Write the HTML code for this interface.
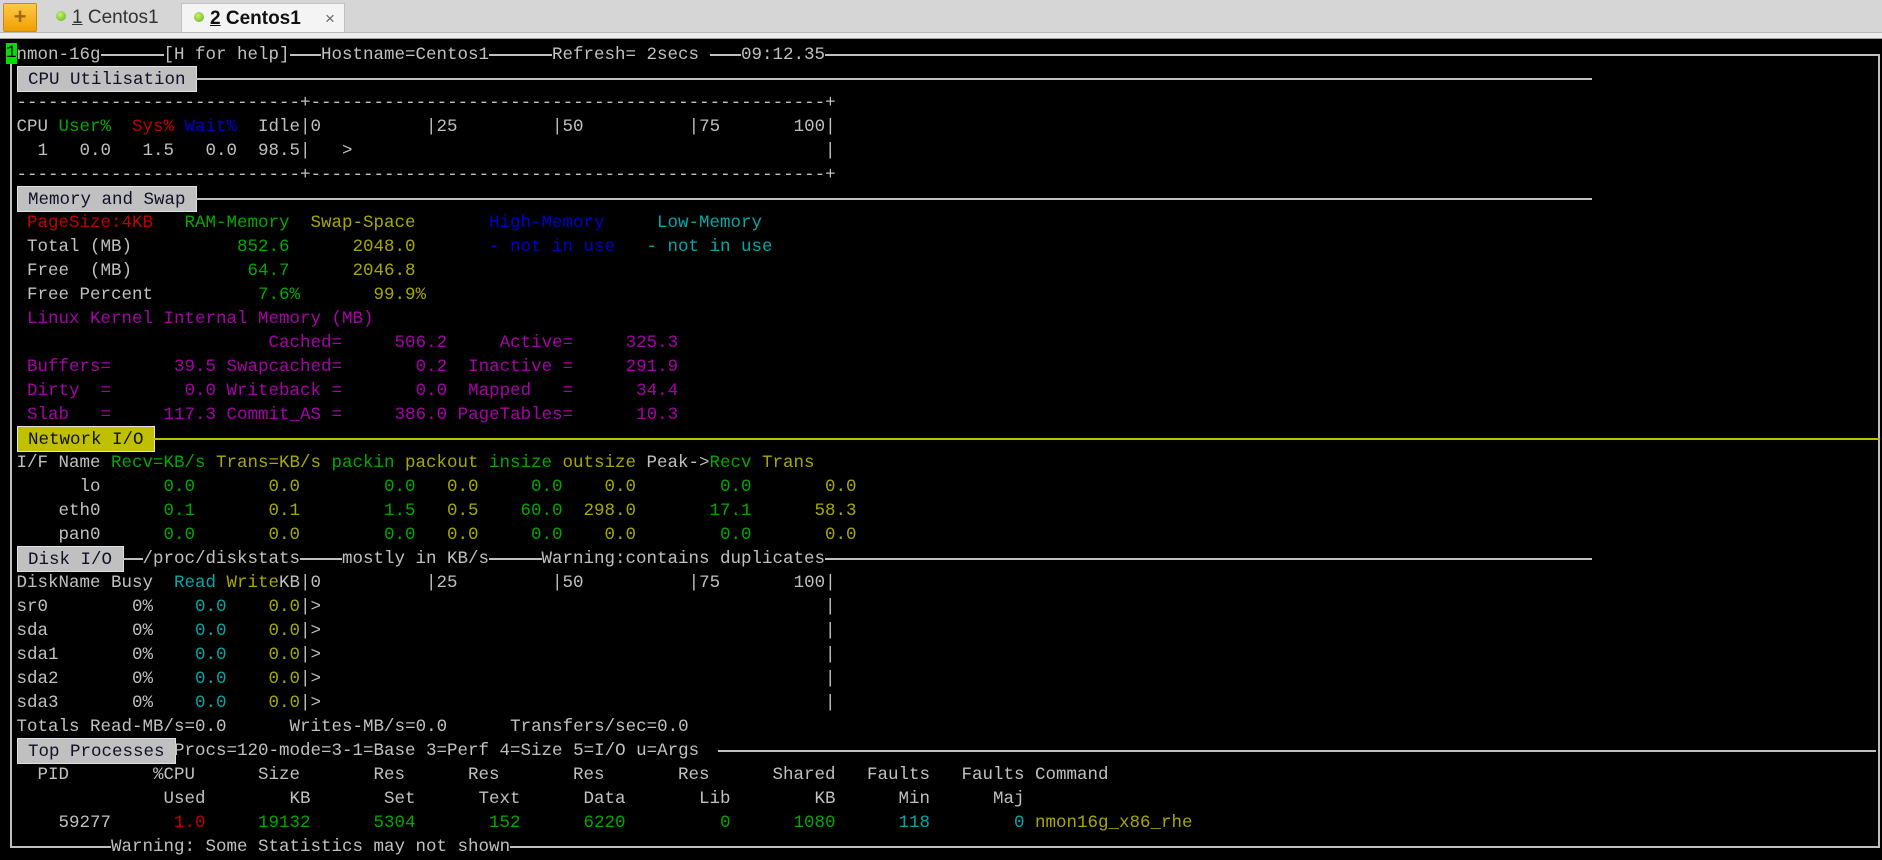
<!DOCTYPE html>
<html><head><meta charset="utf-8">
<style>
*{margin:0;padding:0;box-sizing:border-box}
html,body{width:1882px;height:860px;overflow:hidden;background:#000}
#tabs{position:absolute;left:0;top:0;width:1882px;height:39px;background:#d6d6d6;font-family:"Liberation Sans",sans-serif}
#tabs .sep{position:absolute;left:0;top:32px;width:1882px;height:7px;background:#ececec;border-top:1px solid #b8b8b8;border-bottom:1px solid #a0a0a0}
.plus{position:absolute;left:3px;top:3px;width:34px;height:29px;background:linear-gradient(#ffc84a,#f0a000);border:1px solid #c88a10;border-radius:2px;color:#9a6a10;font-weight:bold;font-size:22px;text-align:center;line-height:26px}
.tab{position:absolute;top:3px;height:30px;font-size:19px;line-height:29px;color:#333}
.dot{display:inline-block;width:10px;height:10px;border-radius:50%;background:radial-gradient(circle at 40% 35%,#c8f070,#60b010);vertical-align:middle;margin-right:6px;position:relative;top:-2px}
.tab2{left:181px;width:164px;background:#f4f4f4;border:1px solid #c0c0c0;border-bottom:none;padding-left:12px;font-weight:bold;color:#111}
#term{position:absolute;left:0;top:39px;width:1882px;height:821px;background:#000}
.r{position:absolute;left:0;height:24px;width:1882px}
.t{position:absolute;top:0;white-space:pre;font-family:"Liberation Mono",monospace;font-size:17.5px;line-height:24px;color:#c0c0c0;left:calc(6px + var(--c)*10.5px)}
.e{position:absolute;top:0;white-space:pre;font-family:"Liberation Mono",monospace;font-size:17.5px;line-height:24px;color:#c0c0c0;left:calc(6px + (var(--e) + 1)*10.5px);transform:translateX(-100%)}
.g{color:#00a800}.rd{color:#c00000}.b{color:#0000c8}.y{color:#a8a800}.c{color:#00a8a8}.m{color:#a800a8}
.lbl{background:#c0c0c0;color:#101028;height:26px;top:-1px;line-height:26px;border:1px solid #e0e0e0}
.lbly{background:#c0c000;color:#101010}
.h{position:absolute;height:2px;background:#c0c0c0;top:11px}
.v{position:absolute;width:2px;background:#c0c0c0}
.cur{background:#00e000;color:#000;height:21px;line-height:21px;top:0}
</style></head><body>
<div id="tabs">
  <div class="plus">+</div>
  <div class="tab" style="left:46px;padding-left:10px"><span class="dot"></span><u>1</u> Centos1</div>
  <div class="tab tab2"><span class="dot"></span><u>2</u> Centos1<span style="position:absolute;left:143px;font-weight:normal;color:#666;font-size:17px">×</span></div>
  <div class="sep"></div>
</div>
<div id="term"></div>

<div class="v" style="left:10px;top:55px;height:793px"></div>
<div class="v" style="left:1878px;top:55px;height:793px"></div>

<div class="r" style="top:43px">
<span class="t cur" style="--c:0">1</span>
<span class="t" style="--c:1">nmon-16g</span>
<div class="h" style="left:100.5px;width:63px"></div>
<span class="t" style="--c:15">[H for help]</span>
<div class="h" style="left:289.5px;width:31.5px"></div>
<span class="t" style="--c:30">Hostname=Centos1</span>
<div class="h" style="left:489px;width:63px"></div>
<span class="t" style="--c:52">Refresh= 2secs</span>
<div class="h" style="left:709.5px;width:31.5px"></div>
<span class="t" style="--c:70">09:12.35</span>
<div class="h" style="left:825px;width:1055px"></div>
</div>

<div class="r" style="top:67px">
<span class="t lbl" style="--c:1"> CPU Utilisation </span>
<div class="h" style="left:195px;width:1397px"></div>
</div>
<div class="r" style="top:91px"><span class="t" style="--c:1">---------------------------+-------------------------------------------------+</span></div>
<div class="r" style="top:115px">
<span class="t" style="--c:1">CPU</span><span class="t g" style="--c:5">User%</span><span class="t rd" style="--c:12">Sys%</span><span class="t b" style="--c:17">Wait%</span><span class="t" style="--c:24">Idle|0          |25         |50          |75       100|</span>
</div>
<div class="r" style="top:139px"><span class="t" style="--c:1">  1   0.0   1.5   0.0  98.5|   &gt;</span><span class="t" style="--c:78">|</span></div>
<div class="r" style="top:163px"><span class="t" style="--c:1">---------------------------+-------------------------------------------------+</span></div>

<div class="r" style="top:187px">
<span class="t lbl" style="--c:1"> Memory and Swap </span>
<div class="h" style="left:195px;width:1397px"></div>
</div>
<div class="r" style="top:211px">
<span class="t rd" style="--c:2">PageSize:4KB</span><span class="t g" style="--c:17">RAM-Memory</span><span class="t y" style="--c:29">Swap-Space</span><span class="t b" style="--c:46">High-Memory</span><span class="t c" style="--c:62">Low-Memory</span>
</div>
<div class="r" style="top:235px">
<span class="t" style="--c:2">Total (MB)</span><span class="e g" style="--e:26">852.6</span><span class="e y" style="--e:38">2048.0</span><span class="t b" style="--c:46">- not in use</span><span class="t c" style="--c:61">- not in use</span>
</div>
<div class="r" style="top:259px">
<span class="t" style="--c:2">Free  (MB)</span><span class="e g" style="--e:26">64.7</span><span class="e y" style="--e:38">2046.8</span>
</div>
<div class="r" style="top:283px">
<span class="t" style="--c:2">Free Percent</span><span class="e g" style="--e:27">7.6%</span><span class="e y" style="--e:39">99.9%</span>
</div>
<div class="r" style="top:307px"><span class="t m" style="--c:2">Linux Kernel Internal Memory (MB)</span></div>
<div class="r" style="top:331px"><span class="t m" style="--c:2">                       Cached=     506.2     Active=     325.3</span></div>
<div class="r" style="top:355px"><span class="t m" style="--c:2">Buffers=      39.5 Swapcached=       0.2  Inactive =     291.9</span></div>
<div class="r" style="top:379px"><span class="t m" style="--c:2">Dirty  =       0.0 Writeback =       0.0  Mapped   =      34.4</span></div>
<div class="r" style="top:403px"><span class="t m" style="--c:2">Slab   =     117.3 Commit_AS =     386.0 PageTables=      10.3</span></div>

<div class="r" style="top:427px">
<span class="t lbl lbly" style="--c:1"> Network I/O </span>
<div class="h" style="left:153px;width:1727px;background:#c0c000"></div>
</div>
<div class="r" style="top:451px">
<span class="t" style="--c:1">I/F Name</span><span class="t g" style="--c:10">Recv=KB/s</span><span class="t y" style="--c:20">Trans=KB/s</span><span class="t g" style="--c:31">packin</span><span class="t y" style="--c:38">packout</span><span class="t g" style="--c:46">insize</span><span class="t y" style="--c:53">outsize</span><span class="t" style="--c:61">Peak-&gt;</span><span class="t g" style="--c:67">Recv</span><span class="t y" style="--c:72">Trans</span>
</div>
<div class="r" style="top:475px">
<span class="e" style="--e:8">lo</span><span class="e g" style="--e:17">0.0</span><span class="e y" style="--e:27">0.0</span><span class="e g" style="--e:38">0.0</span><span class="e y" style="--e:44">0.0</span><span class="e g" style="--e:52">0.0</span><span class="e y" style="--e:59">0.0</span><span class="e g" style="--e:70">0.0</span><span class="e y" style="--e:80">0.0</span>
</div>
<div class="r" style="top:499px">
<span class="e" style="--e:8">eth0</span><span class="e g" style="--e:17">0.1</span><span class="e y" style="--e:27">0.1</span><span class="e g" style="--e:38">1.5</span><span class="e y" style="--e:44">0.5</span><span class="e g" style="--e:52">60.0</span><span class="e y" style="--e:59">298.0</span><span class="e g" style="--e:70">17.1</span><span class="e y" style="--e:80">58.3</span>
</div>
<div class="r" style="top:523px">
<span class="e" style="--e:8">pan0</span><span class="e g" style="--e:17">0.0</span><span class="e y" style="--e:27">0.0</span><span class="e g" style="--e:38">0.0</span><span class="e y" style="--e:44">0.0</span><span class="e g" style="--e:52">0.0</span><span class="e y" style="--e:59">0.0</span><span class="e g" style="--e:70">0.0</span><span class="e y" style="--e:80">0.0</span>
</div>

<div class="r" style="top:547px">
<span class="t lbl" style="--c:1"> Disk I/O </span>
<div class="h" style="left:121.5px;width:21px"></div>
<span class="t" style="--c:13">/proc/diskstats</span>
<div class="h" style="left:300px;width:42px"></div>
<span class="t" style="--c:32">mostly in KB/s</span>
<div class="h" style="left:489px;width:52.5px"></div>
<span class="t" style="--c:51">Warning:contains duplicates</span>
<div class="h" style="left:825px;width:767px"></div>
</div>
<div class="r" style="top:571px">
<span class="t" style="--c:1">DiskName Busy</span><span class="t c" style="--c:16">Read</span><span class="t y" style="--c:21">Write</span><span class="t" style="--c:26">KB|0          |25         |50          |75       100|</span>
</div>
<div class="r" style="top:595px"><span class="t" style="--c:1">sr0</span><span class="t" style="--c:12">0%</span><span class="e c" style="--e:20">0.0</span><span class="e y" style="--e:27">0.0</span><span class="t" style="--c:28">|&gt;</span><span class="t" style="--c:78">|</span></div>
<div class="r" style="top:619px"><span class="t" style="--c:1">sda</span><span class="t" style="--c:12">0%</span><span class="e c" style="--e:20">0.0</span><span class="e y" style="--e:27">0.0</span><span class="t" style="--c:28">|&gt;</span><span class="t" style="--c:78">|</span></div>
<div class="r" style="top:643px"><span class="t" style="--c:1">sda1</span><span class="t" style="--c:12">0%</span><span class="e c" style="--e:20">0.0</span><span class="e y" style="--e:27">0.0</span><span class="t" style="--c:28">|&gt;</span><span class="t" style="--c:78">|</span></div>
<div class="r" style="top:667px"><span class="t" style="--c:1">sda2</span><span class="t" style="--c:12">0%</span><span class="e c" style="--e:20">0.0</span><span class="e y" style="--e:27">0.0</span><span class="t" style="--c:28">|&gt;</span><span class="t" style="--c:78">|</span></div>
<div class="r" style="top:691px"><span class="t" style="--c:1">sda3</span><span class="t" style="--c:12">0%</span><span class="e c" style="--e:20">0.0</span><span class="e y" style="--e:27">0.0</span><span class="t" style="--c:28">|&gt;</span><span class="t" style="--c:78">|</span></div>
<div class="r" style="top:715px"><span class="t" style="--c:1">Totals Read-MB/s=0.0      Writes-MB/s=0.0      Transfers/sec=0.0</span></div>

<div class="r" style="top:739px">
<span class="t lbl" style="--c:1"> Top Processes </span>
<span class="t" style="--c:16">Procs=120-mode=3-1=Base 3=Perf 4=Size 5=I/O u=Args</span>
<div class="h" style="left:718px;width:1158px"></div>
</div>
<div class="r" style="top:763px">
<span class="e" style="--e:5">PID</span><span class="e" style="--e:17">%CPU</span><span class="e" style="--e:27">Size</span><span class="e" style="--e:37">Res</span><span class="e" style="--e:46">Res</span><span class="e" style="--e:56">Res</span><span class="e" style="--e:66">Res</span><span class="e" style="--e:78">Shared</span><span class="e" style="--e:87">Faults</span><span class="e" style="--e:96">Faults</span><span class="t" style="--c:98">Command</span>
</div>
<div class="r" style="top:787px">
<span class="e" style="--e:18">Used</span><span class="e" style="--e:28">KB</span><span class="e" style="--e:38">Set</span><span class="e" style="--e:48">Text</span><span class="e" style="--e:58">Data</span><span class="e" style="--e:68">Lib</span><span class="e" style="--e:78">KB</span><span class="e" style="--e:87">Min</span><span class="e" style="--e:96">Maj</span>
</div>
<div class="r" style="top:811px">
<span class="e" style="--e:9">59277</span><span class="e rd" style="--e:18">1.0</span><span class="e g" style="--e:28">19132</span><span class="e g" style="--e:38">5304</span><span class="e g" style="--e:48">152</span><span class="e g" style="--e:58">6220</span><span class="e g" style="--e:68">0</span><span class="e g" style="--e:78">1080</span><span class="e c" style="--e:87">118</span><span class="e c" style="--e:96">0</span><span class="t y" style="--c:98">nmon16g_x86_rhe</span>
</div>
<div class="r" style="top:835px">
<div class="h" style="left:10px;width:101px"></div>
<span class="t" style="--c:10">Warning: Some Statistics may not shown</span>
<div class="h" style="left:510px;width:1370px"></div>
</div>
</body></html>
